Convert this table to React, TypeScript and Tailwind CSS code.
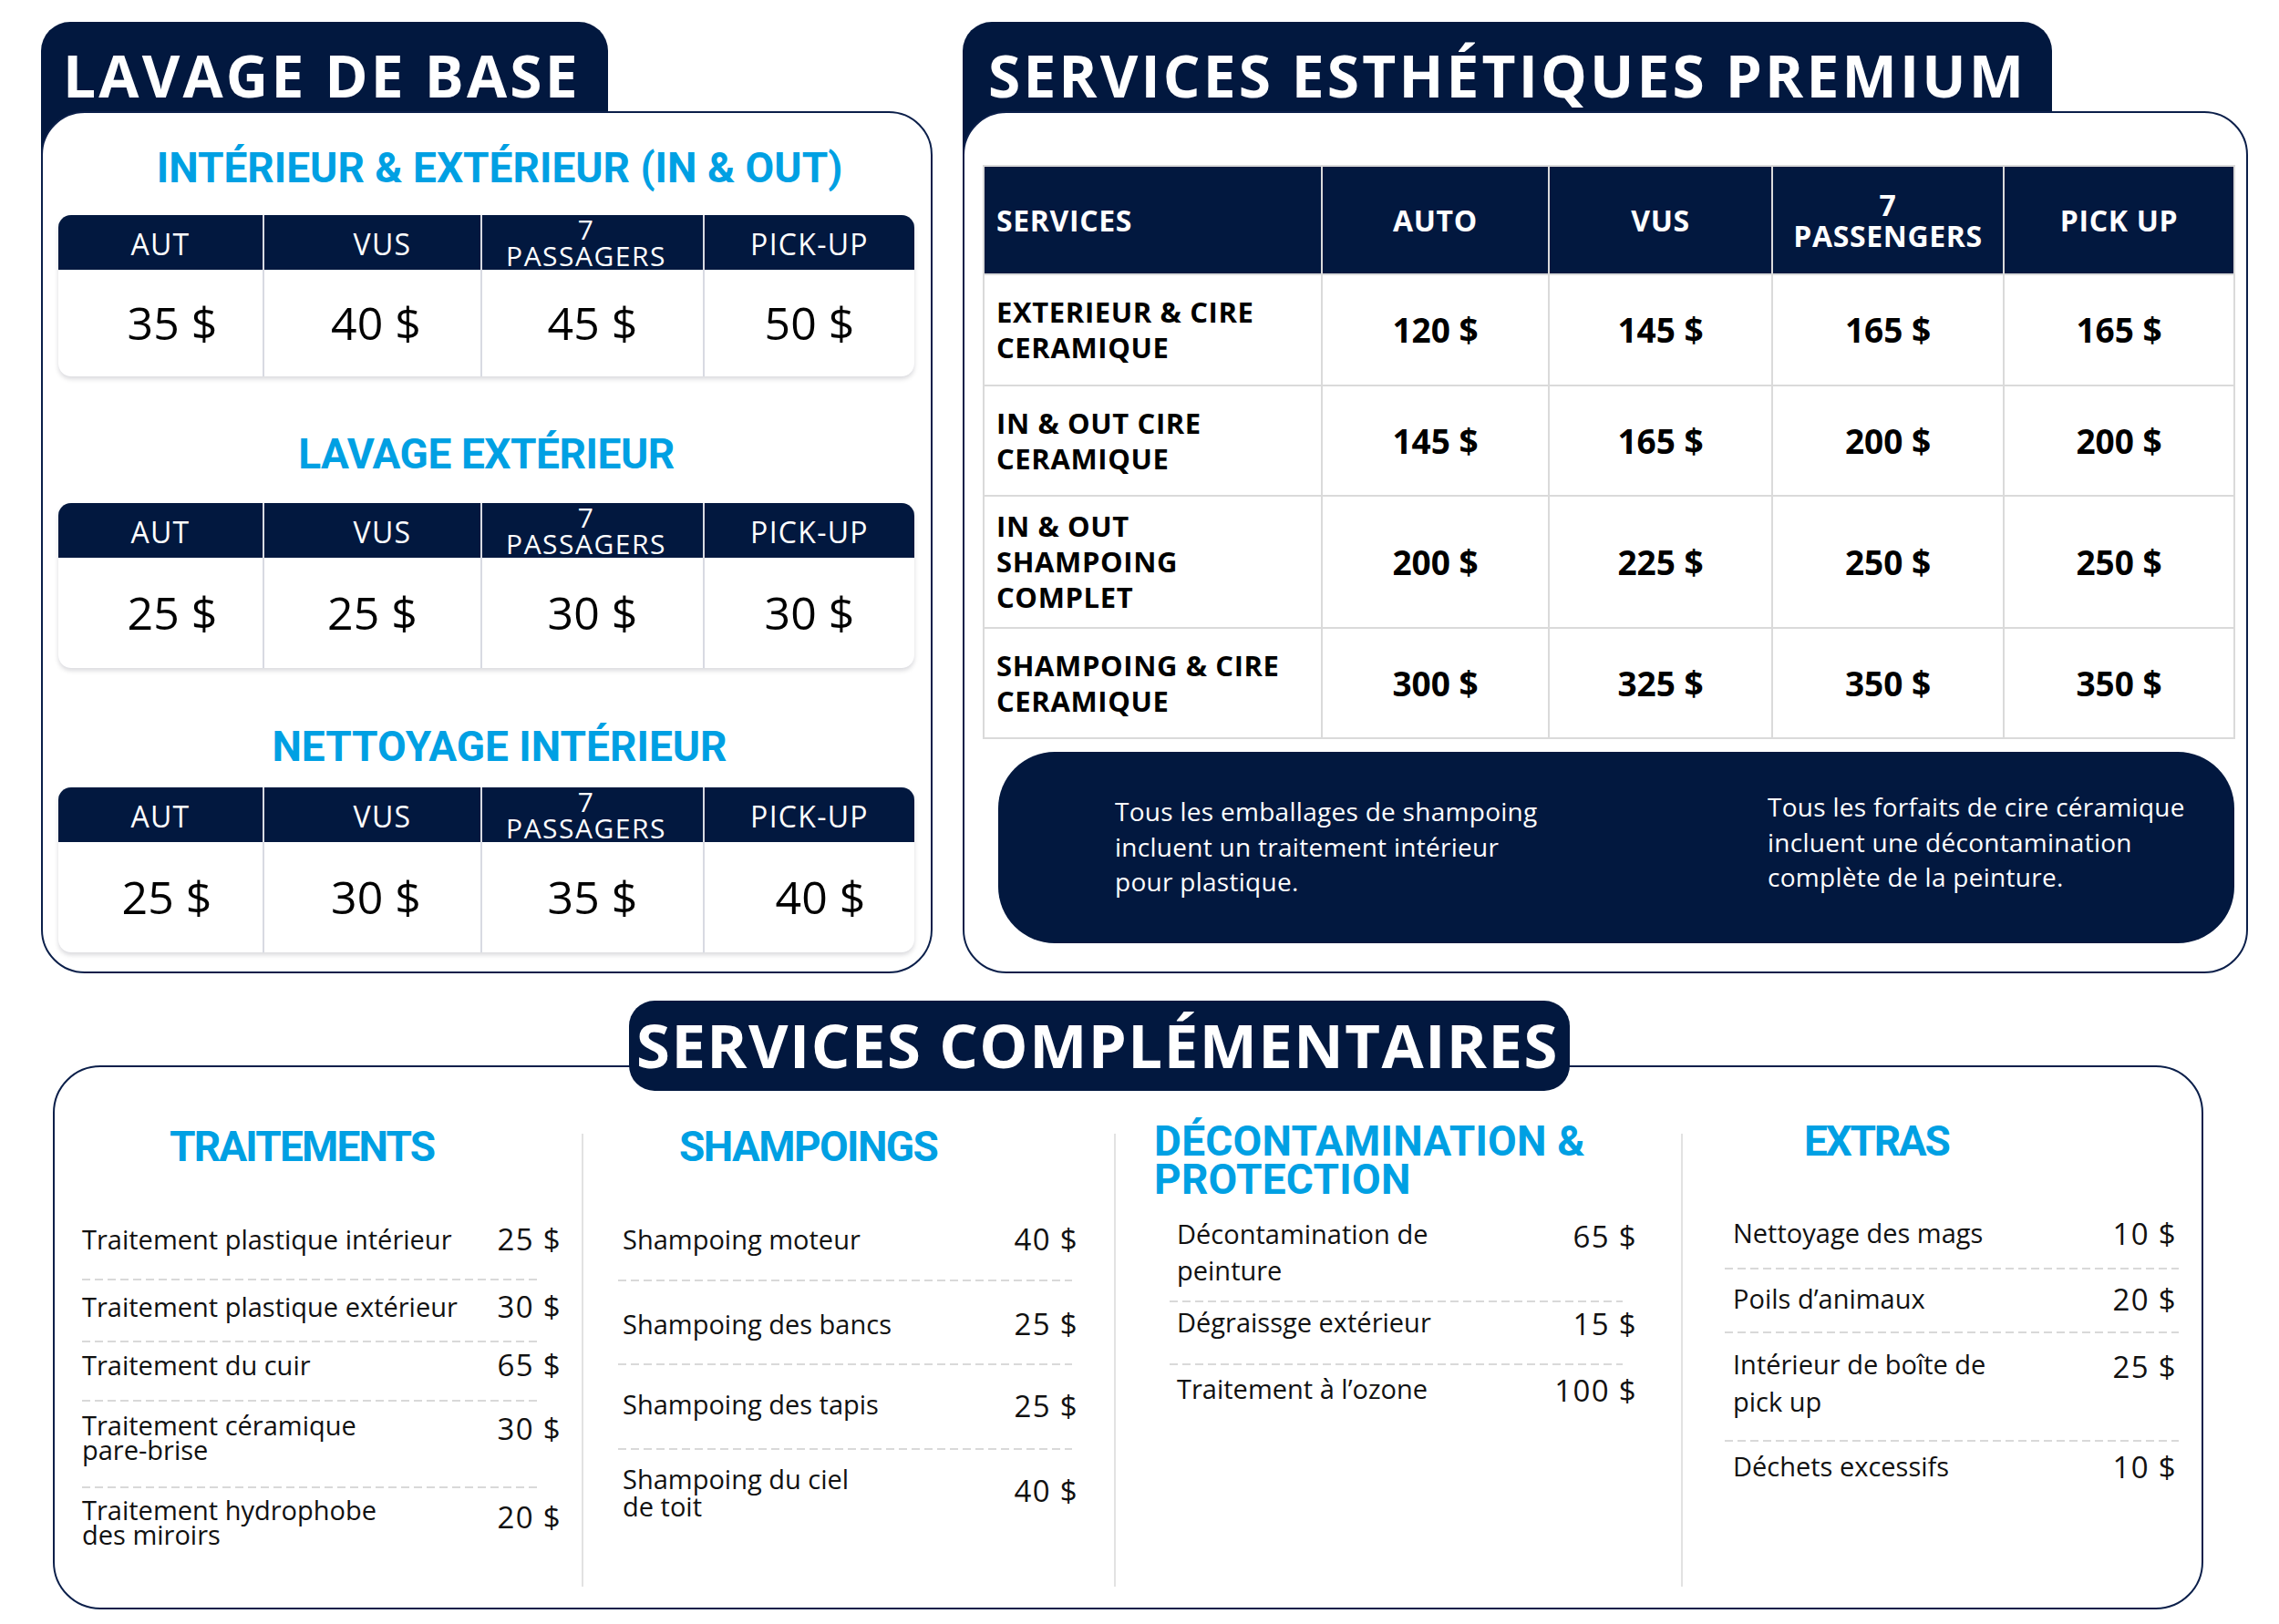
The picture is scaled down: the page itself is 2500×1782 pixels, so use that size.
import React from "react";

const OS = "font-['Open_Sans',sans-serif]";
const RB = "font-['Roboto',sans-serif]";
const NAVY = "bg-[#02183f]";
const BLUE = "text-[#00a0e3]";
const DASH =
  "h-[2px] bg-[image:repeating-linear-gradient(90deg,#d9d9d9_0px,#d9d9d9_9px,transparent_9px,transparent_14px)]";

function BasicTable({
  prices,
  bodyH,
  offs,
}: {
  prices: string[];
  bodyH: string;
  offs: string[];
}) {
  const corners = ["rounded-bl-[14px]", "", "", "rounded-br-[14px]"];
  return (
    <div className="grid grid-cols-[224px_237px_242px_230px] gap-x-[2px] bg-[#d8dae2] rounded-[14px] shadow-[0_3px_5px_rgba(0,0,30,0.15)]">
      <div className={`h-[60px] ${NAVY} rounded-tl-[14px] flex items-center justify-center text-white text-[32px] leading-[32px] tracking-[0.04em] font-medium`}>
        <span className="pt-[3px]">AUT</span>
      </div>
      <div className={`h-[60px] ${NAVY} flex items-center justify-center pl-[22px] text-white text-[32px] leading-[32px] tracking-[0.04em] font-medium`}>
        <span className="pt-[3px]">VUS</span>
      </div>
      <div className={`h-[60px] ${NAVY} flex items-center justify-center pr-[14px] text-center text-white text-[30px] leading-[29px] tracking-[0.05em] font-medium`}>
        <span>
          7<br />
          PASSAGERS
        </span>
      </div>
      <div className={`h-[60px] ${NAVY} rounded-tr-[14px] flex items-center justify-center text-white text-[32px] leading-[32px] tracking-[0.04em] font-medium`}>
        <span className="pt-[3px]">PICK-UP</span>
      </div>
      {prices.map((p, i) => (
        <div
          key={"p" + i}
          className={`${bodyH} ${offs[i]} ${corners[i]} bg-white flex items-center justify-center text-[50px] text-black font-medium`}
        >
          {p}
        </div>
      ))}
    </div>
  );
}

function PremiumTable() {
  const rows: { label: React.ReactNode; h: string; prices: string[] }[] = [
    {
      label: (
        <>
          EXTERIEUR &amp; CIRE
          <br />
          CERAMIQUE
        </>
      ),
      h: "h-[120px]",
      prices: ["120 $", "145 $", "165 $", "165 $"],
    },
    {
      label: (
        <>
          IN &amp; OUT CIRE
          <br />
          CERAMIQUE
        </>
      ),
      h: "h-[119px]",
      prices: ["145 $", "165 $", "200 $", "200 $"],
    },
    {
      label: (
        <>
          IN &amp; OUT
          <br />
          SHAMPOING
          <br />
          COMPLET
        </>
      ),
      h: "h-[143px]",
      prices: ["200 $", "225 $", "250 $", "250 $"],
    },
    {
      label: (
        <>
          SHAMPOING &amp; CIRE
          <br />
          CERAMIQUE
        </>
      ),
      h: "h-[119px]",
      prices: ["300 $", "325 $", "350 $", "350 $"],
    },
  ];
  return (
    <div className="w-[1374px] grid grid-cols-[369px_247px_243px_252px_251px] gap-[2px] p-[2px] bg-[#dadada]">
      <div className={`h-[117px] ${NAVY} flex items-center pl-[13px] text-white text-[32px] font-bold tracking-[0.02em]`}>
        SERVICES
      </div>
      <div className={`h-[117px] ${NAVY} flex items-center justify-center text-white text-[32px] font-bold tracking-[0.02em]`}>
        AUTO
      </div>
      <div className={`h-[117px] ${NAVY} flex items-center justify-center text-white text-[32px] font-bold tracking-[0.02em]`}>
        VUS
      </div>
      <div className={`h-[117px] ${NAVY} flex items-center justify-center text-center text-white text-[32px] leading-[34px] font-bold tracking-[0.02em]`}>
        <span>
          7<br />
          PASSENGERS
        </span>
      </div>
      <div className={`h-[117px] ${NAVY} flex items-center justify-center text-white text-[32px] font-bold tracking-[0.02em]`}>
        PICK UP
      </div>
      {rows.map((r, ri) => (
        <React.Fragment key={ri}>
          <div className={`${r.h} bg-white flex items-center pl-[13px] text-black text-[31px] leading-[39px] font-bold tracking-[0.02em]`}>
            <span>{r.label}</span>
          </div>
          {r.prices.map((p, pi) => (
            <div
              key={pi}
              className={`${r.h} bg-white flex items-center justify-center text-black text-[37px] font-bold`}
            >
              {p}
            </div>
          ))}
        </React.Fragment>
      ))}
    </div>
  );
}

function Item({
  text,
  price,
  h,
  tp,
  pp,
  lh,
}: {
  text: React.ReactNode;
  price: string;
  h: string;
  tp: string;
  pp: string;
  lh: string;
}) {
  return (
    <div className={`flex justify-between ${h}`}>
      <div className={`${tp} ${lh} text-[29px] text-[#111]`}>{text}</div>
      <div className={`${pp} leading-[28px] text-[33px] text-[#111] whitespace-nowrap tracking-[0.04em]`}>
        {price}
      </div>
    </div>
  );
}

export default function App() {
  return (
    <div className={`w-[2500px] h-[1782px] bg-white overflow-hidden ${OS}`}>
      {/* Top row */}
      <div className="flex pt-[24px] pl-[45px] gap-[33px]">
        {/* Panel 1 */}
        <div className="w-[978px] shrink-0 flex flex-col">
          <div className={`w-[622px] h-[146px] ${NAVY} rounded-t-[32px] pl-[24px] pt-[27px]`}>
            <div className="text-white text-[64px] leading-[64px] font-bold tracking-[0.05em] whitespace-nowrap">
              LAVAGE DE BASE
            </div>
          </div>
          <div className="relative -mt-[48px] h-[946px] bg-white border-2 border-[#0b1f4a] rounded-[48px] pt-[37px] pl-[17px] pr-[18px]">
            <div className={`${RB} ${BLUE} h-[46px] text-[46px] leading-[46px] font-bold tracking-[0em] text-center pl-[29px] whitespace-nowrap`}>
              INTÉRIEUR &amp; EXTÉRIEUR (IN &amp; OUT)
            </div>
            <div className="mt-[29px]">
              <BasicTable
                prices={["35 $", "40 $", "45 $", "50 $"]}
                bodyH="h-[117px]"
                offs={["pl-[26px]", "pl-[8px]", "pl-0", "pl-0"]}
              />
            </div>
            <div className={`${RB} ${BLUE} mt-[62px] h-[46px] text-[46px] leading-[46px] font-bold tracking-[-0.01em] text-center whitespace-nowrap`}>
              LAVAGE EXTÉRIEUR
            </div>
            <div className="mt-[31px]">
              <BasicTable
                prices={["25 $", "25 $", "30 $", "30 $"]}
                bodyH="h-[121px]"
                offs={["pl-[26px]", "pl-0", "pl-0", "pl-0"]}
              />
            </div>
            <div className={`${RB} ${BLUE} mt-[63px] h-[46px] text-[46px] leading-[46px] font-bold tracking-[0em] text-center pl-[29px] whitespace-nowrap`}>
              NETTOYAGE INTÉRIEUR
            </div>
            <div className="mt-[22px]">
              <BasicTable
                prices={["25 $", "30 $", "35 $", "40 $"]}
                bodyH="h-[121px]"
                offs={["pl-[14px]", "pl-[8px]", "pl-0", "pl-[24px]"]}
              />
            </div>
          </div>
        </div>

        {/* Panel 2 */}
        <div className="w-[1410px] shrink-0 flex flex-col">
          <div className={`w-[1195px] h-[146px] ${NAVY} rounded-t-[32px] pl-[28px] pt-[27px]`}>
            <div className="text-white text-[64px] leading-[64px] font-bold tracking-[0.049em] whitespace-nowrap">
              SERVICES ESTHÉTIQUES PREMIUM
            </div>
          </div>
          <div className="relative -mt-[48px] h-[946px] bg-white border-2 border-[#0b1f4a] rounded-[48px] pt-[57px] pl-[20px]">
            <PremiumTable />
            <div className={`mt-[14px] ml-[17px] w-[1356px] h-[210px] ${NAVY} rounded-[62px] flex items-center pb-[2px] text-white text-[28px] leading-[38.5px] tracking-[0.01em]`}>
              <div className="w-[844px] pl-[128px]">
                Tous les emballages de shampoing
                <br />
                incluent un traitement intérieur
                <br />
                pour plastique.
              </div>
              <div className="-mt-[10px]">
                Tous les forfaits de cire céramique
                <br />
                incluent une décontamination
                <br />
                complète de la peinture.
              </div>
            </div>
          </div>
        </div>
      </div>

      {/* Bottom section */}
      <div className="mt-[30px] pl-[58px] flex flex-col">
        <div className={`relative z-10 ml-[632px] w-[1032px] h-[99px] ${NAVY} rounded-[28px] pl-[8px] pt-[15px]`}>
          <div className="text-white text-[67px] leading-[67px] font-bold tracking-[0.022em] whitespace-nowrap">
            SERVICES COMPLÉMENTAIRES
          </div>
        </div>
        <div className="-mt-[28px] w-[2359px] h-[597px] bg-white border-2 border-[#0b1f4a] rounded-[52px] flex">
          {/* Col 1 */}
          <div className="w-[578px] shrink-0 flex flex-col">
            <div className="h-[149px] pt-[64px] pl-[126px]">
              <div className={`${RB} ${BLUE} text-[46px] leading-[46px] font-bold tracking-[-0.04em] whitespace-nowrap`}>
                TRAITEMENTS
              </div>
            </div>
            <div className="ml-[30px] w-[526px]">
              <Item text="Traitement plastique intérieur" price="25 $" h="h-[83px]" tp="pt-[26px]" pp="pt-[26px]" lh="leading-[28px]" />
            </div>
            <div className={`ml-[30px] w-[500px] ${DASH}`} />
            <div className="ml-[30px] w-[526px]">
              <Item text="Traitement plastique extérieur" price="30 $" h="h-[66px]" tp="pt-[15px]" pp="pt-[15px]" lh="leading-[28px]" />
            </div>
            <div className={`ml-[30px] w-[500px] ${DASH}`} />
            <div className="ml-[30px] w-[526px]">
              <Item text="Traitement du cuir" price="65 $" h="h-[63px]" tp="pt-[11px]" pp="pt-[11px]" lh="leading-[28px]" />
            </div>
            <div className={`ml-[30px] w-[500px] ${DASH}`} />
            <div className="ml-[30px] w-[526px]">
              <Item
                text={
                  <>
                    Traitement céramique
                    <br />
                    pare-brise
                  </>
                }
                price="30 $"
                h="h-[93px]"
                tp="pt-[12px]"
                pp="pt-[16px]"
                lh="leading-[27px]"
              />
            </div>
            <div className={`ml-[30px] w-[500px] ${DASH}`} />
            <div className="ml-[30px] w-[526px]">
              <Item
                text={
                  <>
                    Traitement hydrophobe
                    <br />
                    des miroirs
                  </>
                }
                price="20 $"
                h="h-[90px]"
                tp="pt-[10px]"
                pp="pt-[18px]"
                lh="leading-[27px]"
              />
            </div>
          </div>
          <div className="mt-[73px] h-[497px] w-[2px] shrink-0 bg-[#e2e2e2]" />

          {/* Col 2 */}
          <div className="w-[582px] shrink-0 flex flex-col">
            <div className="h-[149px] pt-[64px] pl-[105px]">
              <div className={`${RB} ${BLUE} text-[46px] leading-[46px] font-bold tracking-[-0.035em] whitespace-nowrap`}>
                SHAMPOINGS
              </div>
            </div>
            <div className="ml-[43px] w-[500px]">
              <Item text="Shampoing moteur" price="40 $" h="h-[84px]" tp="pt-[26px]" pp="pt-[26px]" lh="leading-[28px]" />
            </div>
            <div className={`ml-[38px] w-[498px] ${DASH}`} />
            <div className="ml-[43px] w-[500px]">
              <Item text="Shampoing des bancs" price="25 $" h="h-[90px]" tp="pt-[33px]" pp="pt-[33px]" lh="leading-[28px]" />
            </div>
            <div className={`ml-[38px] w-[498px] ${DASH}`} />
            <div className="ml-[43px] w-[500px]">
              <Item text="Shampoing des tapis" price="25 $" h="h-[91px]" tp="pt-[29px]" pp="pt-[31px]" lh="leading-[28px]" />
            </div>
            <div className={`ml-[38px] w-[498px] ${DASH}`} />
            <div className="ml-[43px] w-[500px]">
              <Item
                text={
                  <>
                    Shampoing du ciel
                    <br />
                    de toit
                  </>
                }
                price="40 $"
                h="h-[100px]"
                tp="pt-[17px]"
                pp="pt-[31px]"
                lh="leading-[30px]"
              />
            </div>
          </div>
          <div className="mt-[73px] h-[497px] w-[2px] shrink-0 bg-[#e2e2e2]" />

          {/* Col 3 */}
          <div className="w-[620px] shrink-0 flex flex-col">
            <div className="h-[149px] pt-[60px] pl-[42px]">
              <div className={`${RB} ${BLUE} text-[46px] leading-[42px] font-bold tracking-[0.005em] whitespace-nowrap`}>
                DÉCONTAMINATION &amp;
                <br />
                PROTECTION
              </div>
            </div>
            <div className="ml-[67px] w-[505px]">
              <Item
                text={
                  <>
                    Décontamination de
                    <br />
                    peinture
                  </>
                }
                price="65 $"
                h="h-[107px]"
                tp="pt-[14px]"
                pp="pt-[23px]"
                lh="leading-[40px]"
              />
            </div>
            <div className={`ml-[59px] w-[497px] ${DASH}`} />
            <div className="ml-[67px] w-[505px]">
              <Item text="Dégraissge extérieur" price="15 $" h="h-[67px]" tp="pt-[2px]" pp="pt-[10px]" lh="leading-[40px]" />
            </div>
            <div className={`ml-[59px] w-[497px] ${DASH}`} />
            <div className="ml-[67px] w-[505px]">
              <Item text="Traitement à l’ozone" price="100 $" h="h-[60px]" tp="pt-[6px]" pp="pt-[14px]" lh="leading-[40px]" />
            </div>
          </div>
          <div className="mt-[73px] h-[497px] w-[2px] shrink-0 bg-[#e2e2e2]" />

          {/* Col 4 */}
          <div className="w-[569px] shrink-0 flex flex-col">
            <div className="h-[149px] pt-[58px] pl-[133px]">
              <div className={`${RB} ${BLUE} text-[46px] leading-[46px] font-bold tracking-[-0.05em] whitespace-nowrap`}>
                EXTRAS
              </div>
            </div>
            <div className="ml-[55px] w-[487px]">
              <Item text="Nettoyage des mags" price="10 $" h="h-[71px]" tp="pt-[13px]" pp="pt-[20px]" lh="leading-[40px]" />
            </div>
            <div className={`ml-[46px] w-[498px] ${DASH}`} />
            <div className="ml-[55px] w-[487px]">
              <Item text="Poils d’animaux" price="20 $" h="h-[68px]" tp="pt-[12px]" pp="pt-[19px]" lh="leading-[40px]" />
            </div>
            <div className={`ml-[46px] w-[498px] ${DASH}`} />
            <div className="ml-[55px] w-[487px]">
              <Item
                text={
                  <>
                    Intérieur de boîte de
                    <br />
                    pick up
                  </>
                }
                price="25 $"
                h="h-[117px]"
                tp="pt-[13px]"
                pp="pt-[23px]"
                lh="leading-[41px]"
              />
            </div>
            <div className={`ml-[46px] w-[498px] ${DASH}`} />
            <div className="ml-[55px] w-[487px]">
              <Item text="Déchets excessifs" price="10 $" h="h-[60px]" tp="pt-[7px]" pp="pt-[14px]" lh="leading-[40px]" />
            </div>
          </div>
        </div>
      </div>
    </div>
  );
}
